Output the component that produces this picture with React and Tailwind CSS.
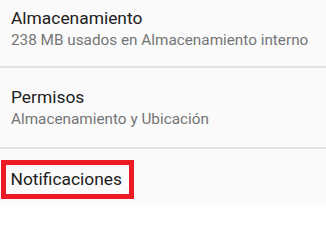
export default function App() {
  return (
    <div className="w-[326px] h-[205px] overflow-hidden bg-[#fafafa] flex flex-col" style={{ fontFamily: 'Roboto, "Noto Sans", sans-serif' }}>
      <div className="pt-[7px] pb-[15px] pl-[11px]">
        <div className="text-[17.4px] leading-[22px] text-[#212121]">Almacenamiento</div>
        <div className="text-[15.3px] leading-[22px] text-[#757575]">238 MB usados en Almacenamiento interno</div>
      </div>
      <div className="h-[2px] bg-[#e2e2e2]" />
      <div className="pt-[18px] pb-[17px] pl-[11px]">
        <div className="text-[17.4px] leading-[22px] text-[#212121]">Permisos</div>
        <div className="text-[15.3px] leading-[22px] text-[#757575]">Almacenamiento y Ubicación</div>
      </div>
      <div className="h-[2px] bg-[#e2e2e2]" />
      <div className="pt-[11px] pl-[1px]">
        <div className="inline-block border-[5px] border-[#ed1c24] pl-[4.5px] pr-[7px] pt-[3px] pb-[4px]">
          <div className="text-[17.4px] leading-[22px] text-[#212121]">Notificaciones</div>
        </div>
      </div>
    </div>
  );
}
